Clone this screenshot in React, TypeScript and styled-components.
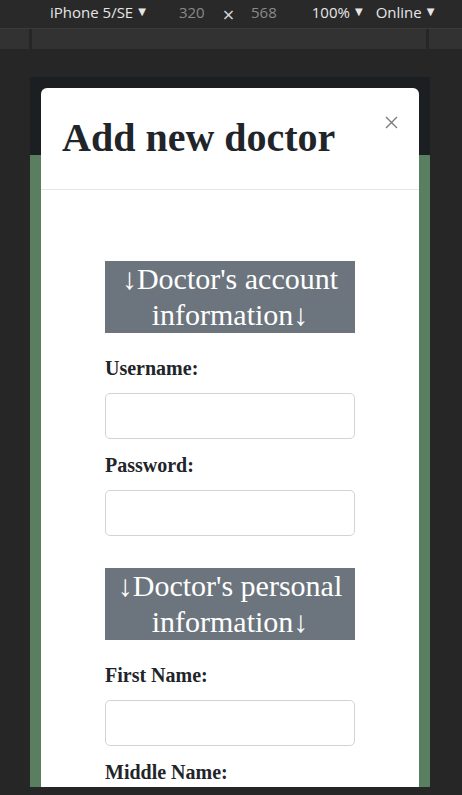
import React from "react";
import styled, { createGlobalStyle } from "styled-components";

const Global = createGlobalStyle`
  html, body { margin: 0; padding: 0; background: #262626; }
  body { width: 462px; height: 795px; overflow: hidden; }
  * { box-sizing: border-box; }
`;

const Page = styled.div`
  width: 462px;
  height: 795px;
  display: flex;
  flex-direction: column;
  background: #262626;
  overflow: hidden;
`;

const Toolbar = styled.div`
  height: 29px;
  display: flex;
  align-items: center;
  padding: 0 0 5px 50px;
  background: #292929;
  border-bottom: 1px solid #3b3b3b;
  font-family: "Open Sans", "Noto Sans", sans-serif;
  font-size: 15px;
  white-space: nowrap;
`;

const ToolItem = styled.span<{ $muted?: boolean; $gap: number }>`
  margin-left: ${(p) => p.$gap}px;
  color: ${(p) => (p.$muted ? "#8a8a8a" : "#e6e6e6")};
  display: inline-flex;
  align-items: center;
`;

const Caret = styled.span`
  font-family: "DejaVu Sans", sans-serif;
  font-size: 10px;
  margin-left: 5px;
  color: #e6e6e6;
`;

const Times = styled.span`
  font-family: "DejaVu Sans", sans-serif;
  font-size: 16px;
  color: #d6d6d6;
  margin-top: 5px;
`;

const Ruler = styled.div`
  height: 20px;
  display: flex;
  background: #323232;
`;

const RulerTick = styled.div`
  width: 3px;
  background: #262626;
`;

const RulerCell = styled.div<{ $w: number }>`
  width: ${(p) => p.$w}px;
  flex: none;
`;

const Stage = styled.div`
  flex: 1;
  padding: 28px 32px 0 30px;
`;

const Viewport = styled.div`
  position: relative;
  width: 400px;
  height: 710px;
  overflow: hidden;
  display: flex;
  flex-direction: column;
  background: #5a7f60;
`;

const NavBar = styled.div`
  height: 78px;
  background: #1c1f22;
  flex: none;
`;

const Scenery = styled.div`
  flex: 1;
  background: #5a7f60;
`;

const Modal = styled.div`
  position: absolute;
  left: 11px;
  top: 11px;
  width: 378px;
  background: #ffffff;
  border-radius: 6px;
  font-family: "Liberation Serif", "Times New Roman", serif;
  color: #212529;
`;

const ModalHeader = styled.div`
  display: flex;
  justify-content: space-between;
  align-items: flex-start;
  padding: 26px 20px 27px 21px;
  border-bottom: 1px solid #e4e6e8;
`;

const Title = styled.h1`
  margin: 0;
  font-size: 40px;
  line-height: 48px;
  font-weight: 700;
`;

const CloseButton = styled.button`
  width: 16px;
  height: 16px;
  margin-top: 0;
  padding: 0;
  border: 0;
  background: transparent;
  display: flex;
  align-items: center;
  justify-content: center;
`;

const ModalBody = styled.div`
  padding: 39px 64px 20px;
`;

const SectionTitle = styled.div`
  margin: 32px 0 20px;
  background: #6c757d;
  color: #ffffff;
  font-size: 30px;
  line-height: 36px;
  text-align: center;
`;

const Field = styled.div`
  margin-bottom: 11px;
`;

const Label = styled.label`
  display: block;
  font-size: 20px;
  line-height: 30px;
  font-weight: 700;
  margin-bottom: 10px;
`;

const Input = styled.input`
  display: block;
  width: 100%;
  height: 46px;
  border: 1px solid #ced4da;
  border-radius: 5px;
  background: #fff;
  font-size: 20px;
  padding: 0 12px;
`;

const Section = styled.section``;

const sections: { title: string[]; fields: string[] }[] = [
  { title: ["↓Doctor's account", "information↓"], fields: ["Username:", "Password:"] },
  {
    title: ["↓Doctor's personal", "information↓"],
    fields: ["First Name:", "Middle Name:"],
  },
];

export default function App() {
  return (
    <Page>
      <Global />
      <Toolbar>
        <ToolItem $gap={0}>
          iPhone 5/SE<Caret>▼</Caret>
        </ToolItem>
        <ToolItem $gap={33} $muted>320</ToolItem>
        <ToolItem $gap={17}>
          <Times>×</Times>
        </ToolItem>
        <ToolItem $gap={16} $muted>568</ToolItem>
        <ToolItem $gap={35}>
          100%<Caret>▼</Caret>
        </ToolItem>
        <ToolItem $gap={13}>
          Online<Caret>▼</Caret>
        </ToolItem>
      </Toolbar>
      <Ruler>
        <RulerCell $w={29} />
        <RulerTick />
        <RulerCell $w={394} />
        <RulerTick />
      </Ruler>
      <Stage>
        <Viewport>
          <NavBar />
          <Scenery />
          <Modal>
            <ModalHeader>
              <Title>Add new doctor</Title>
              <CloseButton aria-label="Close">
                <svg width="13" height="13" viewBox="0 0 13 13">
                  <path d="M1 1L12 12M12 1L1 12" stroke="#7b7b7b" strokeWidth="1.4" />
                </svg>
              </CloseButton>
            </ModalHeader>
            <ModalBody>
              {sections.map((s) => (
                <Section key={s.title[0]}>
                  <SectionTitle>
                    {s.title[0]}
                    <br />
                    {s.title[1]}
                  </SectionTitle>
                  {s.fields.map((f) => (
                    <Field key={f}>
                      <Label>{f}</Label>
                      <Input type={f.startsWith("Password") ? "password" : "text"} />
                    </Field>
                  ))}
                </Section>
              ))}
            </ModalBody>
          </Modal>
        </Viewport>
      </Stage>
    </Page>
  );
}
